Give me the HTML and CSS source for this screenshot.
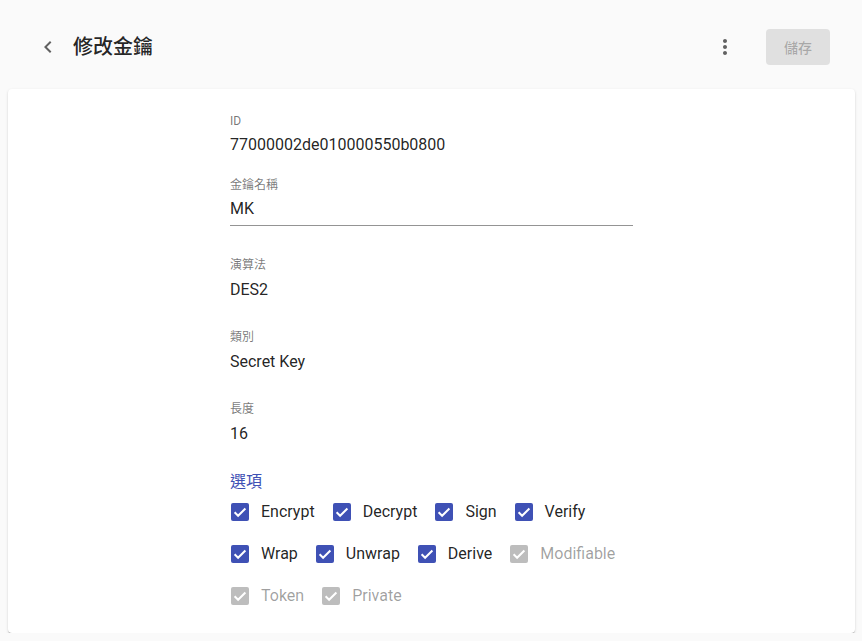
FILE: index.html
```html
<!DOCTYPE html>
<html lang="zh-Hant">
<head>
<meta charset="utf-8">
<link rel="stylesheet" href="styles.css">
</head>
<body>
<header class="topbar">
  <button class="icon-btn back" aria-label="back">
    <svg width="24" height="24" viewBox="0 0 24 24"><path d="M15.41 7.41 14 6l-6 6 6 6 1.41-1.41L10.83 12z" fill="#616161"/></svg>
  </button>
  <h1 class="title">修改金鑰</h1>
  <div class="spacer"></div>
  <button class="icon-btn more" aria-label="more">
    <svg width="24" height="24" viewBox="0 0 24 24"><path d="M12 8c1.1 0 2-.9 2-2s-.9-2-2-2-2 .9-2 2 .9 2 2 2zm0 2c-1.1 0-2 .9-2 2s.9 2 2 2 2-.9 2-2-.9-2-2-2zm0 6c-1.1 0-2 .9-2 2s.9 2 2 2 2-.9 2-2-.9-2-2-2z" fill="#616161"/></svg>
  </button>
  <button class="save" disabled>儲存</button>
</header>
<main class="card">
  <div class="form">
    <div class="field">
      <div class="label">ID</div>
      <div class="value">77000002de010000550b0800</div>
    </div>
    <div class="field input-field">
      <div class="label">金鑰名稱</div>
      <div class="value input">MK</div>
    </div>
    <div class="field">
      <div class="label">演算法</div>
      <div class="value">DES2</div>
    </div>
    <div class="field">
      <div class="label">類別</div>
      <div class="value">Secret Key</div>
    </div>
    <div class="field">
      <div class="label">長度</div>
      <div class="value">16</div>
    </div>
    <div class="section">選項</div>
    <div class="row">
      <label class="cb"><svg class="box" width="18" height="18" viewBox="0 0 18 18"><rect width="18" height="18" rx="2"/><path d="M3.6 9.3 7.1 12.8 14.4 5.5"/></svg><span>Encrypt</span></label>
      <label class="cb"><svg class="box" width="18" height="18" viewBox="0 0 18 18"><rect width="18" height="18" rx="2"/><path d="M3.6 9.3 7.1 12.8 14.4 5.5"/></svg><span>Decrypt</span></label>
      <label class="cb"><svg class="box" width="18" height="18" viewBox="0 0 18 18"><rect width="18" height="18" rx="2"/><path d="M3.6 9.3 7.1 12.8 14.4 5.5"/></svg><span>Sign</span></label>
      <label class="cb"><svg class="box" width="18" height="18" viewBox="0 0 18 18"><rect width="18" height="18" rx="2"/><path d="M3.6 9.3 7.1 12.8 14.4 5.5"/></svg><span>Verify</span></label>
    </div>
    <div class="row">
      <label class="cb"><svg class="box" width="18" height="18" viewBox="0 0 18 18"><rect width="18" height="18" rx="2"/><path d="M3.6 9.3 7.1 12.8 14.4 5.5"/></svg><span>Wrap</span></label>
      <label class="cb"><svg class="box" width="18" height="18" viewBox="0 0 18 18"><rect width="18" height="18" rx="2"/><path d="M3.6 9.3 7.1 12.8 14.4 5.5"/></svg><span>Unwrap</span></label>
      <label class="cb"><svg class="box" width="18" height="18" viewBox="0 0 18 18"><rect width="18" height="18" rx="2"/><path d="M3.6 9.3 7.1 12.8 14.4 5.5"/></svg><span>Derive</span></label>
      <label class="cb disabled"><svg class="box" width="18" height="18" viewBox="0 0 18 18"><rect width="18" height="18" rx="2"/><path d="M3.6 9.3 7.1 12.8 14.4 5.5"/></svg><span>Modifiable</span></label>
    </div>
    <div class="row">
      <label class="cb disabled"><svg class="box" width="18" height="18" viewBox="0 0 18 18"><rect width="18" height="18" rx="2"/><path d="M3.6 9.3 7.1 12.8 14.4 5.5"/></svg><span>Token</span></label>
      <label class="cb disabled"><svg class="box" width="18" height="18" viewBox="0 0 18 18"><rect width="18" height="18" rx="2"/><path d="M3.6 9.3 7.1 12.8 14.4 5.5"/></svg><span>Private</span></label>
    </div>
  </div>
</main>
</body>
</html>
```
FILE: styles.css
```css
* { box-sizing: border-box; }
html, body {
  margin: 0;
  background: #fafafa;
  font-family: Roboto, "Noto Sans CJK TC", sans-serif;
  color: rgba(0,0,0,0.87);
}
.topbar {
  display: flex;
  align-items: center;
  height: 84px;
  margin-top: 5px;
  padding: 0 32px 0 36px;
}
.icon-btn {
  width: 24px;
  height: 24px;
  padding: 0;
  border: 0;
  background: none;
  display: flex;
  align-items: center;
  justify-content: center;
}
.title {
  margin: 0 0 0 13px;
  font-size: 20px;
  font-weight: 500;
  line-height: 28px;
  color: rgba(0,0,0,0.87);
}
.spacer { flex: 1; }
.more { margin-right: 29px; }
.save {
  width: 64px;
  height: 36px;
  border: 0;
  border-radius: 4px;
  background: #e0e0e0;
  color: rgba(0,0,0,0.26);
  font-family: Roboto, "Noto Sans CJK TC", sans-serif;
  font-size: 14px;
  font-weight: 500;
  padding: 0;
}
.card {
  margin: 0 7px 0 8px;
  height: 544px;
  background: #fff;
  border-radius: 4px;
  box-shadow: 0 2px 1px -1px rgba(0,0,0,0.2), 0 1px 1px 0 rgba(0,0,0,0.14), 0 1px 3px 0 rgba(0,0,0,0.12);
  padding-top: 24px;
}
.form {
  width: 403px;
  margin: 0 auto;
}
.field { margin-bottom: 27px; }
.label {
  font-size: 12px;
  line-height: 16px;
  color: rgba(0,0,0,0.54);
}
.value {
  margin-top: 5px;
  font-size: 16px;
  line-height: 24px;
}
.field:first-child { margin-bottom: 20px; }
.field:first-child .value { margin-top: 4px; }
.input-field { margin-bottom: 31px; }
.value.input {
  margin-top: 4px;
  padding-bottom: 4px;
  border-bottom: 1px solid rgba(0,0,0,0.42);
}
.section {
  margin-top: -3px;
  font-size: 16px;
  line-height: 24px;
  color: #3f51b5;
  margin-bottom: 6px;
}
.row {
  display: flex;
  height: 24px;
  margin-bottom: 18px;
  gap: 17px;
}
.cb {
  display: flex;
  align-items: center;
  font-size: 16px;
  line-height: 24px;
  padding-left: 1px;
}
.cb .box { margin-right: 12px; flex: none; }
.cb .box rect { fill: #3f51b5; }
.cb .box path { fill: none; stroke: #fff; stroke-width: 2; }
.cb.disabled { color: rgba(0,0,0,0.38); }
.cb.disabled .box rect { fill: #bdbdbd; }
```
